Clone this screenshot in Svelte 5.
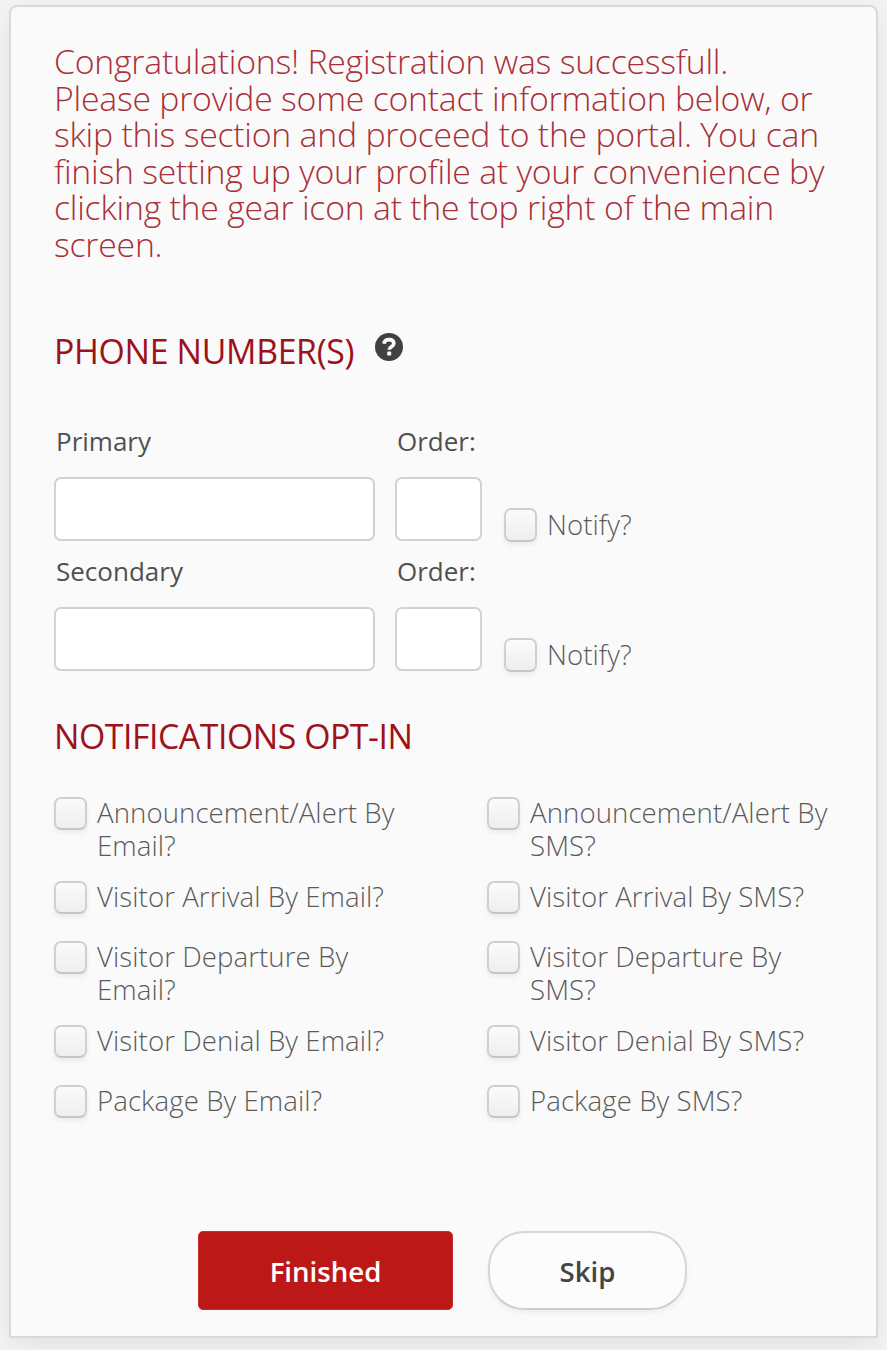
<script>
    let phones = [
      { label: 'Primary', number: '', order: '', notify: false },
      { label: 'Secondary', number: '', order: '', notify: false }
    ];

    let options = [
      { lines: ['Announcement/Alert By', 'Email?'], checked: false },
      { lines: ['Announcement/Alert By', 'SMS?'], checked: false },
      { lines: ['Visitor Arrival By Email?'], checked: false },
      { lines: ['Visitor Arrival By SMS?'], checked: false },
      { lines: ['Visitor Departure By', 'Email?'], checked: false },
      { lines: ['Visitor Departure By', 'SMS?'], checked: false },
      { lines: ['Visitor Denial By Email?'], checked: false },
      { lines: ['Visitor Denial By SMS?'], checked: false },
      { lines: ['Package By Email?'], checked: false },
      { lines: ['Package By SMS?'], checked: false }
    ];
</script>

<main>
    <form class="card" on:submit|preventDefault>
        <p class="intro">
            <span>Congratulations! Registration was successfull.</span>
            <span>Please provide some contact information below, or</span>
            <span>skip this section and proceed to the portal. You can</span>
            <span>finish setting up your profile at your convenience by</span>
            <span>clicking the gear icon at the top right of the main</span>
            <span>screen.</span>
        </p>

        <div class="heading">
            <h2 class="phone-title">PHONE NUMBER(S)</h2>
            <svg class="help" viewBox="0 0 28 28" aria-hidden="true">
                <circle cx="14" cy="14" r="14" fill="#414141" />
                <path d="M9 10.8C9.4 7.6 11.4 6.7 14 6.7c2.8 0 4.8 1.3 4.8 3.8 0 3.4-4.6 3.2-4.6 6.3" fill="none" stroke="#fafafa" stroke-width="3.7" />
                <rect x="12.2" y="18.6" width="4" height="4" rx=".8" fill="#fafafa" />
            </svg>
        </div>

        {#each phones as phone}
            <div class="phone">
                <label class="field number">
                    <span>{phone.label}</span>
                    <input type="text" bind:value={phone.number}>
                </label>
                <label class="field order">
                    <span>Order:</span>
                    <input type="text" bind:value={phone.order}>
                </label>
                <label class="check notify">
                    <input type="checkbox" bind:checked={phone.notify}>
                    <span class="text">Notify?</span>
                </label>
            </div>
        {/each}

        <h2 class="opt-title">NOTIFICATIONS OPT-IN</h2>

        <div class="options">
            {#each options as option}
                <label class="check">
                    <input type="checkbox" bind:checked={option.checked}>
                    <span class="text">
                        {#each option.lines as line}
                            <span class="line">{line}</span>
                        {/each}
                    </span>
                </label>
            {/each}
        </div>

        <div class="buttons">
            <button class="finished" type="submit">Finished</button>
            <button class="skip" type="button">Skip</button>
        </div>
    </form>
</main>

<style>
    :global(body) {
        background: #f4f4f4;
    }

    main {
        box-sizing: border-box;
        width: 887px;
        height: 1350px;
        padding: 5px 9px 0;
        overflow: hidden;
        font-family: "Open Sans", "Liberation Sans", sans-serif;
        color: #505050;
    }

    .card {
        box-sizing: border-box;
        width: 869px;
        height: 1333px;
        padding: 36px 43px 0;
        border: 2px solid #d9d9d9;
        border-radius: 8px 8px 1px 1px;
        background: #fafafa;
        box-shadow: 0 8px 28px rgba(0, 0, 0, 0.08);
    }

    .intro {
        height: 221px;
        margin: 0;
        font-size: 33.8px;
        font-weight: 300;
        line-height: 36.6px;
        letter-spacing: -0.24px;
        color: #a93039;
    }

    .intro span,
    .line {
        display: block;
        white-space: nowrap;
    }

    .heading {
        display: flex;
        align-items: flex-start;
        margin-top: 65px;
        height: 94px;
    }

    h2 {
        margin: 0;
        font-size: 33.8px;
        font-weight: 400;
        line-height: 44px;
        letter-spacing: -0.32px;
        color: #9d1119;
        white-space: nowrap;
    }

    .phone-title {
        width: 321px;
    }

    .help {
        width: 28px;
        height: 28px;
        margin-top: 4px;
    }

    .phone {
        display: flex;
        height: 130px;
    }

    .field {
        display: flex;
        flex-direction: column;
    }

    .field span {
        padding-left: 2px;
        height: 54px;
        font-size: 26px;
        line-height: 36px;
        white-space: nowrap;
    }

    .field input {
        box-sizing: border-box;
        width: 100%;
        height: 64px;
        margin: 0;
        padding: 0 12px;
        border: 2px solid #d2d2d2;
        border-radius: 7px;
        background: #fff;
        font: inherit;
        font-size: 26px;
        outline: none;
    }

    .number {
        width: 321px;
    }

    .order {
        width: 87px;
        margin-left: 20px;
    }

    .check {
        display: flex;
        align-items: flex-start;
        font-size: 27.6px;
        font-weight: 300;
        line-height: 32.6px;
        letter-spacing: 0.08px;
        color: #5a5a5a;
    }

    .check input {
        flex: none;
        box-sizing: border-box;
        appearance: none;
        width: 33px;
        height: 33px;
        margin: 0 10px 0 0;
        border: 2px solid #d0d0d0;
        border-bottom-color: #c6c6c6;
        border-radius: 7px;
        background: linear-gradient(#fbfbfb, #eee);
        box-shadow: 0 3px 5px rgba(0, 0, 0, 0.06);
    }

    .notify {
        margin: 85px 0 0 22px;
    }

    .notify input {
        height: 34px;
    }

    .opt-title {
        margin-top: 31px;
        letter-spacing: -0.45px;
    }

    .options {
        display: grid;
        grid-template-columns: 433px 1fr;
        grid-template-rows: 84px 60px 84px 60px 60px;
        margin-top: 39px;
    }

    .options .text {
        margin-top: -1px;
    }

    .buttons {
        display: flex;
        gap: 35px;
        margin: 86px 0 0 144px;
    }

    button {
        box-sizing: border-box;
        height: 79px;
        padding: 0;
        font-family: inherit;
        font-size: 27.6px;
        font-weight: 600;
    }

    .finished {
        width: 255px;
        border: 1px solid #c92b2b;
        border-radius: 5px;
        background: #bc1818;
        color: #fff;
    }

    .skip {
        width: 199px;
        border: 2px solid #d6d6d6;
        border-bottom-color: #cecece;
        border-radius: 36px;
        background: #fcfcfc;
        color: #444;
        box-shadow: 0 3px 5px rgba(0, 0, 0, 0.05);
    }
</style>
